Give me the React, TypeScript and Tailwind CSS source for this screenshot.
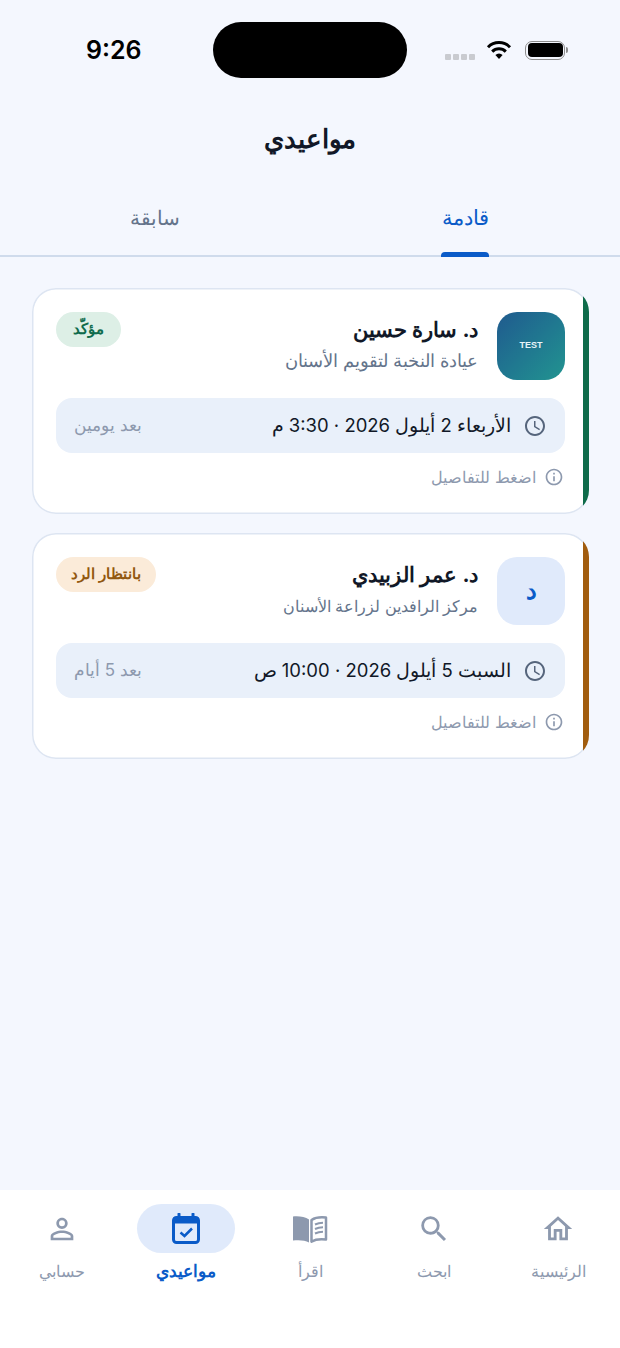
import { MdAccessTime, MdInfoOutline, MdOutlineHome, MdPersonOutline, MdSearch } from "react-icons/md";

function BookIcon() {
  return (
    <svg width="36" height="28" viewBox="0 0 36 28" fill="none">
      <path d="M17 4.500C13 1.800 6.500 .8 1 1.500V25.500C6.500 24.800 13 25 17 27.500Z" fill="currentColor" />
      <path d="M19.500 5C23 2.800 29 2 34 2.600V24.600C29 24 23 24.600 19.500 26.600Z" stroke="currentColor" strokeWidth="2.500" strokeLinejoin="round" />
      <path d="M23 9.500C25.500 8.300 28 7.800 31 7.800M23 14C25.500 12.800 28 12.300 31 12.300M23 18.500C25.500 17.300 28 16.800 31 16.800" stroke="currentColor" strokeWidth="2" />
    </svg>
  );
}

function CalendarCheckIcon() {
  return (
    <svg width="28" height="31" viewBox="0 0 28 31" fill="none">
      <path d="M7 1V5M21 1V5" stroke="currentColor" strokeWidth="3" strokeLinecap="round" />
      <rect x="1.500" y="4.500" width="25" height="25" rx="3" stroke="currentColor" strokeWidth="3" />
      <rect x="1.500" y="4.500" width="25" height="6" fill="currentColor" />
      <path d="M8.500 19.500L12.500 23L20 15.500" stroke="currentColor" strokeWidth="2.500" />
    </svg>
  );
}

const navItems = [
  { label: "الرئيسية", icon: <MdOutlineHome className="text-[34px]" /> },
  { label: "ابحث", icon: <MdSearch className="text-[34px]" /> },
  { label: "اقرأ", icon: <BookIcon /> },
  { label: "مواعيدي", icon: <CalendarCheckIcon />, active: true },
  { label: "حسابي", icon: <MdPersonOutline className="text-[34px]" /> },
];

function StatusBar() {
  return (
    <div dir="ltr" className="relative flex h-[100px] shrink-0 pt-[22px]">
      <div className="flex h-[56px] w-[213px] items-center pt-[1px] pl-[86px] font-['Inter',sans-serif] text-[25px] font-semibold text-black">9:26</div>
      <div className="h-[56px] w-[194px] rounded-[28px] bg-black" />
      <div className="flex h-[56px] flex-1 items-center pl-[38px]">
        <div className="mt-[1px] flex w-[41px] gap-[2px] self-center pt-[12px]">
          <span className="h-[6px] w-[6px] rounded-[1px] bg-[#c9cbd0]" />
          <span className="h-[6px] w-[6px] rounded-[1px] bg-[#c9cbd0]" />
          <span className="h-[6px] w-[6px] rounded-[1px] bg-[#c9cbd0]" />
          <span className="h-[6px] w-[6px] rounded-[1px] bg-[#c9cbd0]" />
        </div>
        <svg width="26" height="20" viewBox="0 0 26 20" className="mb-[1px]">
          <path d="M13 19 L9.400 15 A5 5 0 0 1 16.600 15 Z" fill="#000" />
          <path d="M6.200 11.600 A9.600 9.600 0 0 1 19.800 11.600" fill="none" stroke="#000" strokeWidth="3" />
          <path d="M2 7.200 A15.500 15.500 0 0 1 24 7.200" fill="none" stroke="#000" strokeWidth="3" />
        </svg>
        <div className="ml-[13px] flex items-center">
          <div className="flex h-[19px] w-[40px] items-center justify-center rounded-[7px] border border-[#8d8d8d]">
            <div className="h-[14px] w-[35px] rounded-[4px] bg-black" />
          </div>
          <div className="ml-[1px] h-[6px] w-[2px] rounded-r-full bg-[#8d8d8d]" />
        </div>
      </div>
    </div>
  );
}

function Tabs() {
  return (
    <div className="relative flex h-[65px] shrink-0 border-b-2 border-[#cfdbec]">
      <div className="relative flex w-1/2 justify-center pt-[10px] text-[21px] font-medium text-[#0a5bc8]">
        قادمة
        <span className="absolute bottom-[-2px] left-[131px] h-[5px] w-[48px] rounded-t-[4px] bg-[#0a5bc8]" />
      </div>
      <div className="flex w-1/2 justify-center pt-[12px] text-[20px] leading-[29px] font-medium text-[#64748b]">سابقة</div>
    </div>
  );
}

function Card({ name, clinic, clinicCls, when, left, status, statusCls, strip, avatar }: {
  name: string;
  clinic: string;
  clinicCls: string;
  when: string;
  left: string;
  status: string;
  statusCls: string;
  strip: string;
  avatar: React.ReactNode;
}) {
  return (
    <div className="relative h-[226px] overflow-hidden rounded-[24px] bg-white px-[24px] pt-[24px] shadow-[inset_0_0_0_1.500px_#dde5f2]">
      <span className={"absolute top-0 right-0 bottom-0 w-[6px] " + strip} />
      <div className="flex h-[68px] items-start">
        {avatar}
        <div className="mr-[19px] flex-1">
          <p className="text-[21.300px] leading-[35px] font-bold text-[#111827]">{name}</p>
          <p className={"leading-[28px] text-[#64748b] " + clinicCls}>{clinic}</p>
        </div>
        <span className={"flex h-[35px] min-w-[65px] items-center justify-center rounded-full px-[15px] text-[15px] font-semibold " + statusCls}>{status}</span>
      </div>
      <div className="mt-[18px] flex h-[55px] items-center rounded-[16px] bg-[#e9f0fa] px-[18px]">
        <MdAccessTime className="shrink-0 text-[24px] text-[#56657c]" />
        <span className="mr-[12px] flex-1 text-[18.500px] text-[#111827]">{when}</span>
        <span className="text-[17px] text-[#8d99ae]">{left}</span>
      </div>
      <div className="mt-[12px] flex h-[24px] items-center pr-[1px] text-[16.400px] text-[#8d99ae]">
        <MdInfoOutline className="shrink-0 text-[20px]" />
        <span className="mr-[8px]">اضغط للتفاصيل</span>
      </div>
    </div>
  );
}

function BottomNav() {
  return (
    <nav className="flex h-[158px] shrink-0 bg-white pt-[14px]">
      {navItems.map(({ label, icon, active }) => (
        <div key={label} className="flex w-1/5 flex-col items-center">
          <div className={"flex h-[49px] w-[98px] items-center justify-center rounded-full " + (active ? "bg-[#e0eafb] text-[#0a5bc8]" : "text-[#8d99ae]")}>
            {icon}
          </div>
          <span className={"mt-[4px] leading-[28px] " + (active ? "text-[17px] font-semibold text-[#0a5bc8]" : "text-[16px] text-[#8d99ae]")}>{label}</span>
        </div>
      ))}
    </nav>
  );
}

export default function App() {
  return (
    <div dir="rtl" className="flex h-[1348px] w-[620px] flex-col overflow-hidden bg-[#f4f7fe] font-['Inter','Noto_Sans',sans-serif]">
      <StatusBar />
      <h1 className="h-[92px] shrink-0 pt-[18px] text-center text-[26px] leading-[42px] font-semibold text-[#111827]">مواعيدي</h1>
      <Tabs />
      <main className="flex flex-1 flex-col gap-[19px] pt-[31px] pr-[31px] pl-[32px]">
        <Card
          name="د. سارة حسين"
          clinic="عيادة النخبة لتقويم الأسنان"
          clinicCls="text-[18px]"
          when="الأربعاء 2 أيلول 2026 · 3:30 م"
          left="بعد يومين"
          status="مؤكّد"
          statusCls="bg-[#ddefe6] text-[#0f6b4c]"
          strip="bg-[#0e6b4a]"
          avatar={
            <div className="flex h-[68px] w-[68px] shrink-0 items-center justify-center rounded-[20px] bg-gradient-to-br from-[#205a8e] to-[#229490] font-['Liberation_Sans',sans-serif] text-[9px] font-bold text-[#e8f4f8]">
              TEST
            </div>
          }
        />
        <Card
          name="د. عمر الزبيدي"
          clinic="مركز الرافدين لزراعة الأسنان"
          clinicCls="text-[16px]"
          when="السبت 5 أيلول 2026 · 10:00 ص"
          left="بعد 5 أيام"
          status="بانتظار الرد"
          statusCls="bg-[#fbebd9] text-[#92580f]"
          strip="bg-[#a15c0e]"
          avatar={
            <div className="flex h-[68px] w-[68px] shrink-0 items-center justify-center rounded-[20px] bg-[#e0eafb] text-[24px] font-bold text-[#0a5bc8]">
              د
            </div>
          }
        />
      </main>
      <BottomNav />
    </div>
  );
}
